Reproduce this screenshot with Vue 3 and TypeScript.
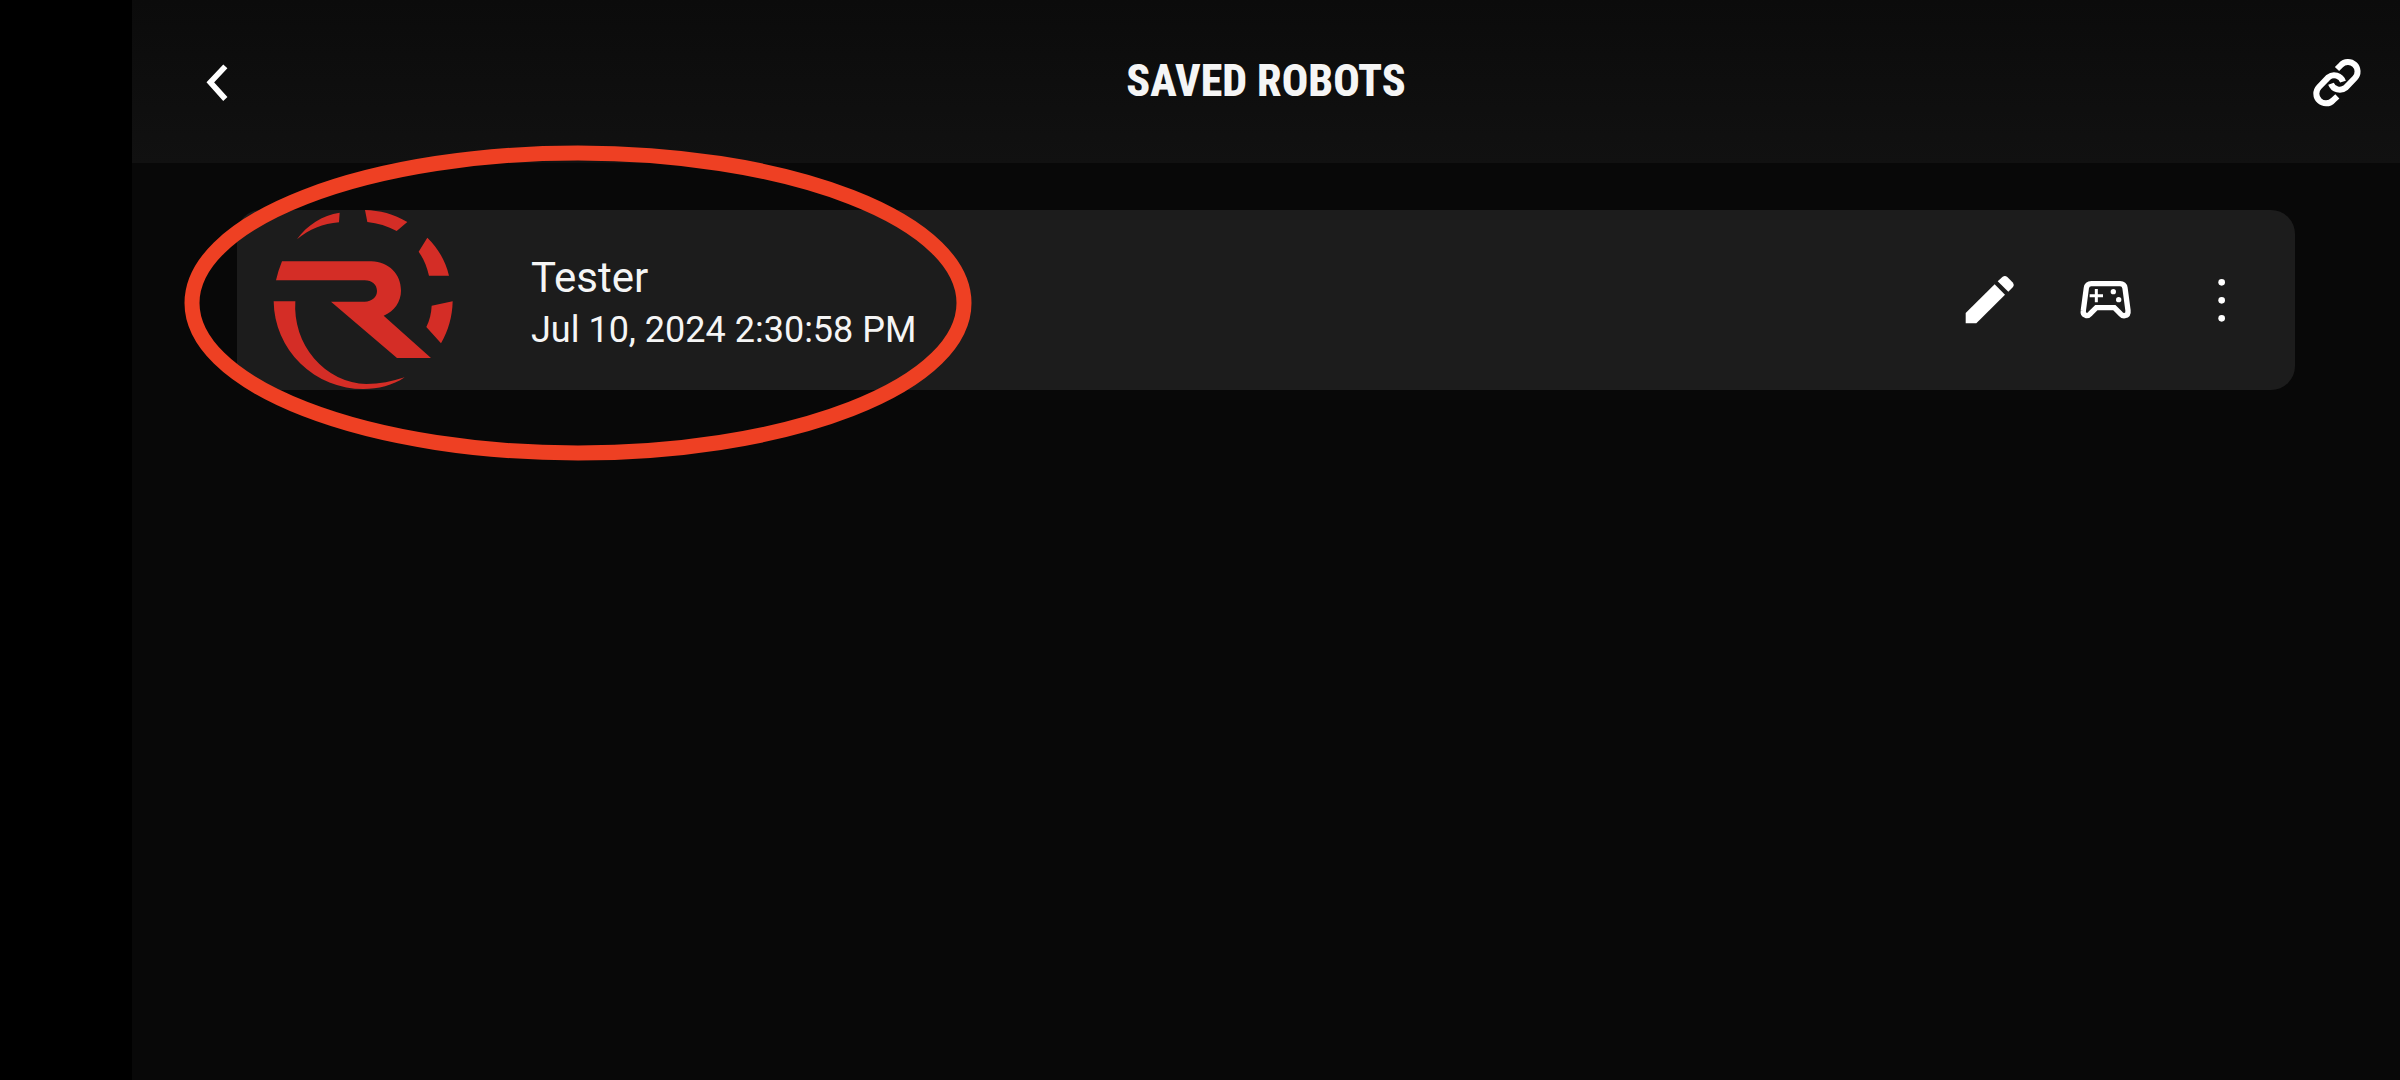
<script setup lang="ts">
interface Robot {
  id: number
  name: string
  savedAt: string
}

const robots: Robot[] = [{ id: 1, name: 'Tester', savedAt: 'Jul 10, 2024 2:30:58 PM' }]
</script>

<template>
  <div class="screen">
    <header class="bar">
      <button class="icon-button back" type="button" aria-label="Back">
        <svg width="100" height="90" viewBox="-6 -9 300 270">
          <path d="M166 79 121 127l45 50" fill="none" stroke="#fff" stroke-width="17" />
        </svg>
      </button>
      <h1 class="title">SAVED ROBOTS</h1>
      <button class="icon-button link" type="button" aria-label="Connect">
        <svg width="120" height="90" viewBox="-8 -9 360 270">
          <g fill="none" stroke="#fff" stroke-width="18">
            <path d="M172 87 184 75A28 28 0 0 1 226 114L198 143A28 28 0 0 1 154 131" />
            <path d="M173 169 160 181A28 28 0 0 1 118 141L146 112A28 28 0 0 1 190 125" />
          </g>
        </svg>
      </button>
    </header>

    <main class="content">
      <ul class="list">
        <li v-for="robot in robots" :key="robot.id" class="card">
          <svg class="logo" viewBox="40 30 540 540" aria-hidden="true">
            <g fill="#d42d26">
              <path d="M112 118C142 75 188 46 240 38L238 67C190 71 148 88 112 118Z" />
              <path d="M316 30C360 31 402 42 443 66L411 93C384 78 354 69 323 66Z" />
              <path d="M503 113C536 145 558 184 568 227H508C502 201 492 176 477 155Z" />
              <path d="M579 304C578 350 566 392 544 430L500 381C510 360 515 340 516 317Z" />
              <path d="M67 184H335C388 186 424 222 424 272C424 304 404 334 372 347L514 474H412L214 305H315C337 305 352 291 352 273C352 254 337 241 315 241H49Q56 211 67 184Z" />
              <path d="M42 304H107A220 232 0 0 0 320 552C360 552 397 545 435 532C399 557 355 567 312 567A268 266 0 0 1 42 304Z" />
            </g>
          </svg>
          <div class="details">
            <span class="name">{{ robot.name }}</span>
            <span class="date">{{ robot.savedAt }}</span>
          </div>
          <div class="actions">
            <button class="action" type="button" aria-label="Edit">
              <svg width="100" height="100" viewBox="-3 0 300 300" fill="#fff">
                <path d="M77 189 164 103 195 134 109 220H77Z" />
                <path d="M173 94 188 80Q195 75 202 81L219 98Q224 105 219 111L205 125Z" />
              </svg>
            </button>
            <button class="action" type="button" aria-label="Drive">
              <svg width="100" height="100" viewBox="-15 0 300 300">
                <path
                  d="M94 101H180Q193 101 195 114L204 181Q206 195 194 197 187 198 181 191L163 173H109L91 191Q85 198 77 196 68 193 70 181L79 114Q81 101 94 101Z"
                  fill="none"
                  stroke="#fff"
                  stroke-width="16"
                />
                <path d="M109 117V157M89 137H129" stroke="#fff" stroke-width="9" />
                <circle cx="160" cy="125" r="8" fill="#fff" />
                <circle cx="176" cy="149" r="8" fill="#fff" />
              </svg>
            </button>
            <button class="action" type="button" aria-label="More options">
              <svg width="100" height="100" viewBox="-2 0 300 300" fill="#fff">
                <circle cx="150" cy="97" r="10" />
                <circle cx="150" cy="151" r="10" />
                <circle cx="150" cy="205" r="10" />
              </svg>
            </button>
          </div>
        </li>
      </ul>
      <svg class="highlight" viewBox="0 0 788 316" aria-hidden="true">
        <ellipse cx="394" cy="158" rx="386" ry="150" fill="none" stroke="#ee4023" stroke-width="15" />
      </svg>
    </main>
  </div>
</template>

<style>
body {
  margin: 0;
  background: #080808;
}
</style>

<style scoped>
.screen {
  box-sizing: border-box;
  min-height: 100vh;
  border-left: 132px solid #000;
  background: #080808;
  color: #f5f5f5;
  font-family: Roboto, "Liberation Sans", sans-serif;
}

.bar {
  display: grid;
  grid-template-columns: 1fr auto 1fr;
  align-items: center;
  height: 163px;
  background: linear-gradient(#0b0b0b, #111);
}

.title {
  margin: 0 0 2px;
  font-family: "Liberation Sans Narrow", "Roboto Condensed", Roboto, sans-serif;
  font-size: 44px;
  line-height: 48px;
  font-weight: 800;
}

button {
  display: flex;
  align-items: center;
  justify-content: center;
  padding: 0;
  border: 0;
  background: none;
}

svg {
  flex: none;
}

.icon-button {
  width: 72px;
  height: 72px;
}

.back {
  margin-left: 50px;
}

.link {
  justify-self: end;
  margin-right: 27px;
}

.content {
  position: relative;
  padding: 47px 105px 0;
}

.list {
  margin: 0;
  padding: 0;
  list-style: none;
}

.card {
  display: flex;
  align-items: center;
  padding: 0 16px 0 36px;
  border-radius: 24px;
  background: #1c1c1c;
}

.logo {
  width: 180px;
  height: 180px;
}

.details {
  display: flex;
  flex: 1;
  flex-direction: column;
  margin-top: 4px;
  margin-left: 78px;
}

.name {
  font-size: 42px;
  line-height: 56px;
}

.date {
  font-size: 36px;
  line-height: 48px;
}

.actions {
  display: flex;
}

.action {
  width: 116px;
  height: 116px;
}

.highlight {
  position: absolute;
  top: -18px;
  left: 52px;
  width: 788px;
  height: 316px;
  pointer-events: none;
}
</style>
